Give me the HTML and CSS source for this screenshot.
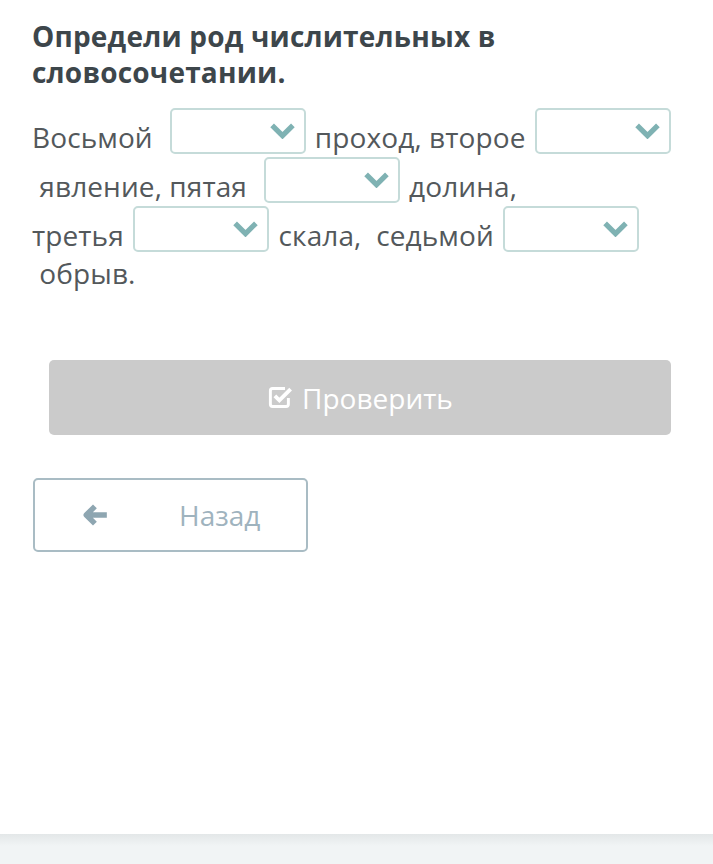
FILE: index.html
```html
<!DOCTYPE html>
<html lang="ru">

<head>
    <meta charset="UTF-8">
    <title>Определи род числительных</title>
    <link rel="stylesheet" href="styles.css">
</head>

<body>
    <div class="card">
        <h1 class="task-title">Определи род числительных в словосочетании.</h1>

        <p class="task-text">Восьмой&nbsp; <span class="pick"><svg class="chev" viewBox="0 0 26 16"><path d="M3 3l10 10 10-10" /></svg></span> проход, второе <span class="pick"><svg class="chev" viewBox="0 0 26 16"><path d="M3 3l10 10 10-10" /></svg></span> &nbsp;явление, пятая&nbsp; <span class="pick"><svg class="chev" viewBox="0 0 26 16"><path d="M3 3l10 10 10-10" /></svg></span> долина,<br>третья <span class="pick"><svg class="chev" viewBox="0 0 26 16"><path d="M3 3l10 10 10-10" /></svg></span> скала,&nbsp; седьмой <span class="pick"><svg class="chev" viewBox="0 0 26 16"><path d="M3 3l10 10 10-10" /></svg></span> &nbsp;обрыв.</p>

        <button type="button" class="check-btn">
            <svg class="check-ico" viewBox="0 0 24 24">
                <path d="M19 12.5V18a2 2 0 0 1-2 2H5a2 2 0 0 1-2-2V6a2 2 0 0 1 2-2h11" fill="none" stroke="#fff" stroke-width="2.6" />
                <path d="M7 10.5l4 4 10-10" fill="none" stroke="#fff" stroke-width="3.4" />
            </svg>
            Проверить
        </button>

        <button type="button" class="back-btn">
            <svg class="back-ico" viewBox="0 0 24 20">
                <path d="M11 2L3 10l8 8M4 10h18" fill="none" stroke="#8ea6b1" stroke-width="5" stroke-linejoin="round" />
            </svg>
            <span class="back-label">Назад</span>
        </button>
    </div>

    <div class="footer"></div>
</body>

</html>
```

FILE: styles.css
```css
body {
    margin: 0;
    background-color: #f1f4f5;
    font-family: "Open Sans", "Liberation Sans", sans-serif;
}

.card {
    background-color: white;
    height: 834px;
    padding: 18px 20px 0 32px;
    box-sizing: border-box;
}

.task-title {
    margin: 0;
    font-size: 28px;
    line-height: 36px;
    font-weight: 700;
    color: #3d464b;
    letter-spacing: 0.2px;
}

.task-text {
    margin: 17px 0 0;
    font-size: 28px;
    line-height: 38px;
    color: #53585b;
    letter-spacing: 0.1px;
}

.pick {
    display: inline-block;
    position: relative;
    width: 136px;
    height: 46px;
    box-sizing: border-box;
    border: 2px solid #c5dbd9;
    border-radius: 5px;
    margin: 1px 2px;
    vertical-align: -7px;
    background-color: white;
}

.chev {
    position: absolute;
    right: 8px;
    top: 12px;
    width: 27px;
    height: 17px;
}

.chev path {
    fill: none;
    stroke: #7fb2b3;
    stroke-width: 5;
}

.check-btn {
    display: flex;
    align-items: center;
    justify-content: center;
    gap: 8px;
    width: 622px;
    height: 75px;
    margin: 68px 0 0 17px;
    border: none;
    border-radius: 5px;
    background-color: #cbcbcb;
    color: white;
    font-family: "Open Sans", "Liberation Sans", sans-serif;
    font-size: 28px;
}

.check-ico {
    width: 27px;
    height: 27px;
}

.back-btn {
    display: flex;
    align-items: center;
    width: 275px;
    height: 74px;
    margin: 43px 0 0 1px;
    padding: 0 0 0 48px;
    border: 2px solid #a9bcc4;
    border-radius: 5px;
    background-color: white;
    color: #9fb3be;
    font-family: "Open Sans", "Liberation Sans", sans-serif;
    font-size: 28px;
}

.back-ico {
    width: 26px;
    height: 22px;
}

.back-label {
    margin-left: 70px;
}

.footer {
    height: 30px;
    background: linear-gradient(#e3e7e8, #f1f4f5 12px);
}
```
